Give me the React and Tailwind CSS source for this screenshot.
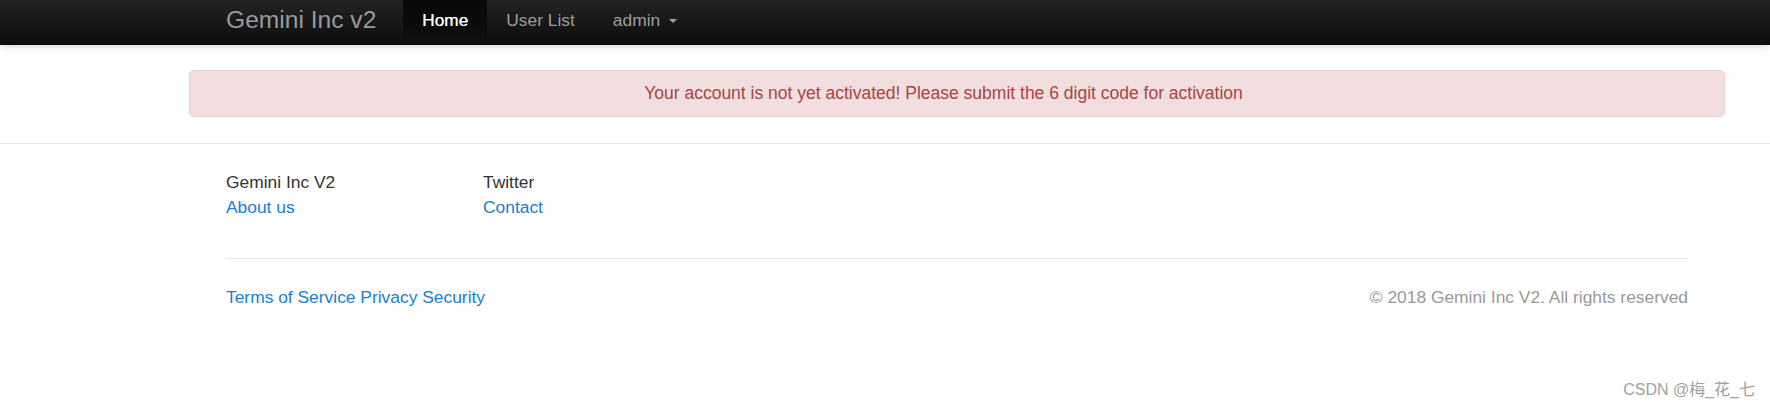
export default function App() {
  return (
    <div
      className="relative h-[407px] w-[1770px] overflow-hidden bg-white text-[17.4px] text-[#333]"
      style={{ fontFamily: '"Liberation Sans", Arial, sans-serif' }}
    >
      <nav className="relative z-10 h-[45px] bg-gradient-to-b from-[#232323] to-[#0d0d0d] shadow-[0_1px_8px_rgba(0,0,0,0.18)]">
        <div className="ml-[226px] flex h-full">
          <a className="block h-full pt-[8px] pr-[27px] text-[24.6px] leading-[24.6px] text-[#9a9a9a]">
            Gemini Inc v2
          </a>
          <a className="block h-full bg-gradient-to-b from-[#080808] to-[#0f0f0f] px-[19px] pt-[12px] text-[17.2px] leading-[17px] font-normal text-white [text-shadow:0_0_0.4px_#fff]">
            Home
          </a>
          <a className="block h-full px-[19px] pt-[12px] text-[17.4px] leading-[17px] text-[#9d9d9d]">
            User List
          </a>
          <a className="flex h-full items-start px-[19px] pt-[12px] text-[17.4px] leading-[17px] text-[#9d9d9d]">
            admin
            <span className="ml-[9px] mt-[6.5px] h-0 w-0 border-x-[4.5px] border-t-[4.5px] border-x-transparent border-t-[#9d9d9d]" />
          </a>
        </div>
      </nav>

      <div className="ml-[189px] w-[1536px] pt-[25px]">
        <div className="flex h-[47px] items-center justify-center rounded-[5px] border border-[#ebccd1] bg-[#f2dede] pr-[27px] text-[17.5px] text-[#a94442]">
          Your account is not yet activated! Please submit the 6 digit code for activation
        </div>
      </div>

      <footer className="mt-[26px] border-t border-[#e7e7e7]">
        <div className="ml-[226px] w-[1462px] pt-[26px] leading-[24.5px]">
          <div className="flex">
            <div className="w-[257px]">
              <div>Gemini Inc V2</div>
              <a className="block text-[#1880d0]">About us</a>
            </div>
            <div>
              <div>Twitter</div>
              <a className="block text-[#1880d0]">Contact</a>
            </div>
          </div>
          <div className="mt-[39px] border-t border-[#e6e6e6]" />
          <div className="mt-[26px] flex justify-between">
            <div className="text-[#1880d0]">
              <a>Terms of Service</a> <a>Privacy</a> <a>Security</a>
            </div>
            <div className="text-[#999]">© 2018 Gemini Inc V2. All rights reserved</div>
          </div>
        </div>
      </footer>

      <div
        className="absolute right-[15px] top-[380px] text-[16px] leading-[20px] text-[#a0a0a0]"
        style={{ fontFamily: '"Liberation Sans", "Noto Sans CJK SC", sans-serif' }}
      >
        CSDN @梅_花_七
      </div>
    </div>
  );
}
